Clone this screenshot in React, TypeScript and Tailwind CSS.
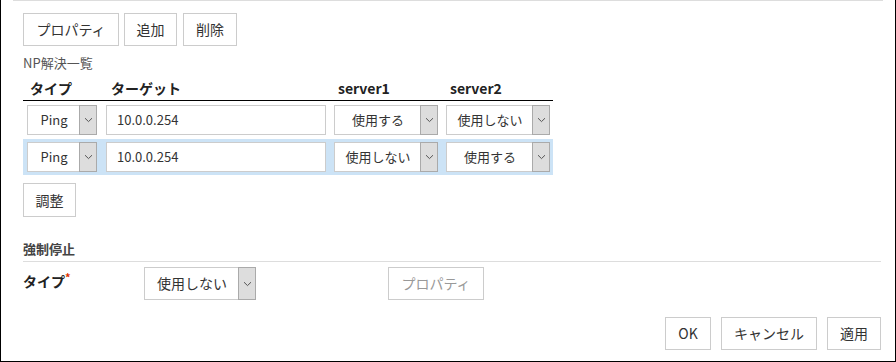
import React from "react";

const font = "font-['Meiryo','Noto_Sans_CJK_JP','Noto_Sans',sans-serif]";

function Btn({
  children,
  className = "",
  disabled,
}: {
  children: React.ReactNode;
  className?: string;
  disabled?: boolean;
}) {
  return (
    <button
      type="button"
      className={`flex h-[33px] items-center justify-center border border-[#cccccc] bg-white text-[14px] ${
        disabled ? "text-[#999999]" : "text-[#333333]"
      } ${className}`}
    >
      {children}
    </button>
  );
}

function Chevron() {
  return (
    <svg width="9" height="6" viewBox="0 0 9 6" fill="none">
      <path d="M1 1.2 4.5 4.6 8 1.2" stroke="#555" strokeWidth="1" />
    </svg>
  );
}

function Select({
  value,
  className = "",
  h = "h-[30px]",
  textClass = "text-[13px]",
}: {
  value: string;
  className?: string;
  h?: string;
  textClass?: string;
}) {
  return (
    <div className={`flex ${h} border border-[#cccccc] bg-white ${className}`}>
      <div className={`flex flex-1 items-center justify-center text-[#333333] ${textClass}`}>
        {value}
      </div>
      <div className="flex w-[18px] items-center justify-center border border-[#aaaaaa] bg-[#dddddd] -m-px">
        <Chevron />
      </div>
    </div>
  );
}

type Row = { type: string; target: string; s1: string; s2: string };

const rows: Row[] = [
  { type: "Ping", target: "10.0.0.254", s1: "使用する", s2: "使用しない" },
  { type: "Ping", target: "10.0.0.254", s1: "使用しない", s2: "使用する" },
];

export default function App() {
  return (
    <div
      className={`${font} relative h-[362px] w-[896px] border-x border-b border-black bg-white text-[#333333]`}
    >
      <div className="mx-[12px] border-t border-[#dddddd]" />
      <div className="pl-[22px] pr-[14px]">
        <div className="mt-[12px] flex">
          <Btn className="w-[96px]">プロパティ</Btn>
          <Btn className="ml-[5px] w-[53px]">追加</Btn>
          <Btn className="ml-[6px] w-[54px]">削除</Btn>
        </div>

        <div className="mt-[8px] text-[13px] leading-[18px] text-[#555555]">NP解決一覧</div>

        <div className="w-[530px]">
          <div className="flex h-[29px] border-b border-black pl-[4px] pt-[6px] text-[14px] font-bold leading-[20px] text-[#222222]">
            <div className="w-[79px] pl-[3px]">タイプ</div>
            <div className="w-[228px] pl-[5px]">ターゲット</div>
            <div className="w-[112px] pl-[4px]">server1</div>
            <div className="pl-[4px]">server2</div>
          </div>

          {rows.map((r, i) => (
            <div
              key={i}
              className={`mt-px flex py-[3px] pl-[4px] ${i === 1 ? "bg-[#cce3f6]" : ""}`}
            >
              <Select value={r.type} className="w-[70px]" />
              <div className="ml-[9px] flex h-[30px] w-[220px] items-center border border-[#cccccc] bg-white pl-[10px] text-[13px]">
                {r.target}
              </div>
              <Select value={r.s1} className="ml-[8px] w-[104px]" />
              <Select value={r.s2} className="ml-[8px] w-[104px]" />
            </div>
          ))}
        </div>

        <Btn className="mt-[8px] h-[34px] w-[53px]">調整</Btn>

        <div className="mt-[23px] border-b border-[#dddddd] pb-[3px] text-[13px] font-bold leading-[18px] text-[#444444]">
          強制停止
        </div>

        <div className="mt-[5px] flex">
          <div className="w-[121px] pt-[5px] text-[14px] font-bold leading-[18px] text-[#222222]">
            タイプ<span className="align-top text-[11px] leading-[11px] text-[#dd3300]">*</span>
          </div>
          <Select value="使用しない" className="w-[112px]" h="h-[33px]" textClass="text-[14px]" />
          <Btn disabled className="ml-[132px] w-[96px]">
            プロパティ
          </Btn>
        </div>

        <div className="mt-[17px] flex justify-end">
          <Btn className="w-[46px]">OK</Btn>
          <Btn className="ml-[10px] w-[96px]">キャンセル</Btn>
          <Btn className="ml-[10px] w-[54px]">適用</Btn>
        </div>
      </div>
    </div>
  );
}
